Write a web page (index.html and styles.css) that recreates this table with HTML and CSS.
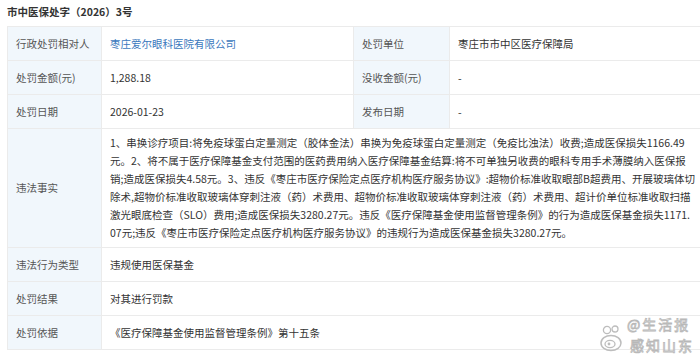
FILE: index.html
```html
<!DOCTYPE html>
<html lang="zh-CN">

<head>
    <meta charset="UTF-8">
    <meta name="viewport" content="width=device-width, initial-scale=1.0">
    <title>行政处罚信息</title>
    <link rel="stylesheet" href="styles.css">
</head>

<body>
    <div class="page">
        <h3 class="doc-title">市中医保处字（2026）3号</h3>

        <table class="info">
            <colgroup>
                <col class="col-label">
                <col class="col-value">
                <col class="col-label2">
                <col class="col-value2">
            </colgroup>
            <tr>
                <td class="label">行政处罚相对人</td>
                <td class="value"><a class="link" href="#">枣庄爱尔眼科医院有限公司</a></td>
                <td class="label">处罚单位</td>
                <td class="value">枣庄市市中区医疗保障局</td>
            </tr>
            <tr>
                <td class="label">处罚金额(元)</td>
                <td class="value">1,288.18</td>
                <td class="label">没收金额(元)</td>
                <td class="value">-</td>
            </tr>
            <tr>
                <td class="label">处罚日期</td>
                <td class="value">2026-01-23</td>
                <td class="label">发布日期</td>
                <td class="value">-</td>
            </tr>
            <tr class="tall">
                <td class="label">违法事实</td>
                <td class="value facts" colspan="3">1、串换诊疗项目:将免疫球蛋白定量测定（胶体金法）串换为免疫球蛋白定量测定（免疫比浊法）收费;造成医保损失1166.49<br>元。2、将不属于医疗保障基金支付范围的医药费用纳入医疗保障基金结算:将不可单独另收费的眼科专用手术薄膜纳入医保报<br>销;造成医保损失4.58元。3、违反《枣庄市医疗保险定点医疗机构医疗服务协议》:超物价标准收取眼部B超费用、开展玻璃体切<br>除术,超物价标准收取玻璃体穿刺注液（药）术费用、超物价标准收取玻璃体穿刺注液（药）术费用、超计价单位标准收取扫描<br>激光眼底检查（SLO）费用;造成医保损失3280.27元。违反《医疗保障基金使用监督管理条例》的行为造成医保基金损失1171.<br>07元;违反《枣庄市医疗保险定点医疗机构医疗服务协议》的违规行为造成医保基金损失3280.27元。</td>
            </tr>
            <tr>
                <td class="label">违法行为类型</td>
                <td class="value" colspan="3">违规使用医保基金</td>
            </tr>
            <tr>
                <td class="label">处罚结果</td>
                <td class="value" colspan="3">对其进行罚款</td>
            </tr>
            <tr>
                <td class="label">处罚依据</td>
                <td class="value" colspan="3">《医疗保障基金使用监督管理条例》第十五条</td>
            </tr>
        </table>
    </div>

    <div class="watermark">
        <svg class="wm-logo" width="24" height="28" viewBox="0 0 24 28">
            <ellipse cx="11" cy="19" rx="10" ry="7.5" fill="none" stroke="#bdbdbd" stroke-width="1.5"/>
            <ellipse cx="10" cy="20" rx="5" ry="3.6" fill="none" stroke="#bdbdbd" stroke-width="1.3"/>
            <circle cx="9" cy="20" r="1.4" fill="#bdbdbd"/>
            <circle cx="7" cy="6" r="3.6" fill="none" stroke="#bdbdbd" stroke-width="1.3"/>
            <circle cx="15" cy="5" r="3" fill="none" stroke="#bdbdbd" stroke-width="1.3"/>
        </svg>
        <div class="wm-text">
            <span class="wm-top">@生活报</span>
            <span class="wm-bottom">感知山东</span>
        </div>
    </div>
</body>

</html>
```

FILE: styles.css
```css
body {
    margin: 0;
    font-family: "Noto Sans CJK SC", "Noto Sans", sans-serif;
    background: #fff;
    overflow: hidden;
    position: relative;
    height: 356px;
}

.page {
    padding-left: 7px;
}

.doc-title {
    margin: 0;
    padding-top: 5px;
    font-size: 10.5px;
    line-height: 14px;
    font-weight: bold;
    color: #333;
}

.info {
    margin-top: 7px;
    width: 720px;
    border-collapse: collapse;
    table-layout: fixed;
    font-size: 10.5px;
}

.col-label {
    width: 94px;
}

.col-value {
    width: 252px;
}

.col-label2 {
    width: 96px;
}

.info td {
    border: 1px solid #ebebeb;
    height: 33px;
    padding: 0 8px;
    vertical-align: middle;
    line-height: 18px;
}

.label {
    background: #f1f7fc;
    color: #555;
}

.value {
    color: #333;
}

.link {
    color: #3a78bd;
    text-decoration: none;
}

.facts {
    padding: 6px 8px;
    white-space: nowrap;
}

.tall td {
    height: 118px;
}

.watermark {
    position: absolute;
    right: 6px;
    bottom: 0;
    display: flex;
    align-items: flex-end;
    gap: 3px;
}

.wm-logo {
    margin-bottom: 4px;
}

.wm-text {
    display: flex;
    flex-direction: column;
    font-size: 14px;
    line-height: 21px;
    color: rgba(255, 255, 255, 0.6);
    -webkit-text-stroke: 0.8px #b8b8b8;
}

.wm-top {
    letter-spacing: 2px;
}

.wm-bottom {
    margin-left: 3px;
    letter-spacing: 2px;
}
```
